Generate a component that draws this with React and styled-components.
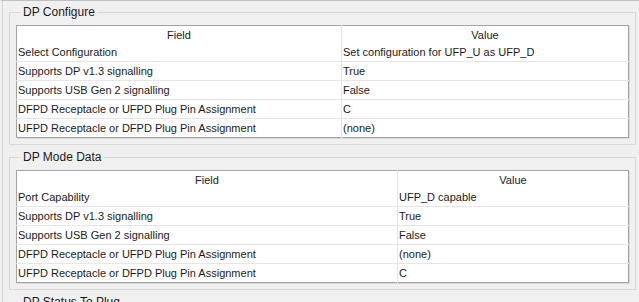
import React from 'react';
import styled, { createGlobalStyle } from 'styled-components';

const configureRows = [
    ['Select Configuration', 'Set configuration for UFP_U as UFP_D'],
    ['Supports DP v1.3 signalling', 'True'],
    ['Supports USB Gen 2 signalling', 'False'],
    ['DFPD Receptacle or UFPD Plug Pin Assignment', 'C'],
    ['UFPD Receptacle or DFPD Plug Pin Assignment', '(none)'],
];

const modeRows = [
    ['Port Capability', 'UFP_D capable'],
    ['Supports DP v1.3 signalling', 'True'],
    ['Supports USB Gen 2 signalling', 'False'],
    ['DFPD Receptacle or UFPD Plug Pin Assignment', '(none)'],
    ['UFPD Receptacle or DFPD Plug Pin Assignment', 'C'],
];

const FieldTable = ({ rows, fieldWidth }) => (
    <Grid>
        <colgroup>
            <col style={{ width: fieldWidth }} />
            <col />
        </colgroup>
        <thead>
            <tr>
                <HeadCell>Field</HeadCell>
                <HeadCell>Value</HeadCell>
            </tr>
        </thead>
        <tbody>
            {rows.map(([field, value], i) => (
                <Row key={field} first={i === 0}>
                    <Cell>{field}</Cell>
                    <Cell>{value}</Cell>
                </Row>
            ))}
        </tbody>
    </Grid>
);

const App = () => (
    <>
        <GlobalStyle />
        <Window>
            <Group>
                <Legend>DP Configure</Legend>
                <FieldTable rows={configureRows} fieldWidth={325} />
            </Group>
            <Group>
                <Legend>DP Mode Data</Legend>
                <FieldTable rows={modeRows} fieldWidth={381} />
            </Group>
            <Group>
                <Legend>DP Status To Plug</Legend>
            </Group>
        </Window>
    </>
);

export default App;

const GlobalStyle = createGlobalStyle`
    html, body {
        margin: 0;
        padding: 0;
        background: #f0f0f0;
        overflow: hidden;
    }
    body {
        font-family: "Liberation Sans", Arial, sans-serif;
        font-size: 11px;
        color: #1a1a1a;
    }
`;

const Window = styled.div`
    height: 302px;
    box-sizing: border-box;
    border-top: 1px solid #bfbfbf;
    border-left: 2px solid #f0f0f0;
    box-shadow: inset 1px 0 0 #d6d6d6;
    padding: 4px 3px 0 7px;
    display: flex;
    flex-direction: column;
    gap: 5px;
    overflow: hidden;
`;

const Group = styled.fieldset`
    flex-shrink: 0;
    margin: 0;
    padding: 6px 5px 6px 6px;
    border: 1px solid #d9d9d9;
    min-width: 0;
    min-height: 40px;
`;

const Legend = styled.legend`
    padding: 0 2px;
    margin-left: 5px;
    line-height: 14px;
    font-size: 12px;
    color: #1a1a1a;
`;

const Grid = styled.table`
    width: 613px;
    border-collapse: collapse;
    table-layout: fixed;
    background: #ffffff;
    border: 1px solid #a3a3a3;
    box-shadow: 1px 1px 0 #dadada;
`;

const HeadCell = styled.th`
    height: 17px;
    padding: 0;
    font-weight: normal;
    text-align: center;
    vertical-align: middle;
    border-left: 1px solid #e3e3e3;

    &:first-child {
        border-left: none;
    }
`;

const Row = styled.tr`
    border-top: ${props => props.first ? 'none' : '1px solid #e6e6e6'};
`;

const Cell = styled.td`
    height: 18px;
    padding: 0 0 0 1px;
    white-space: nowrap;
    overflow: hidden;
    vertical-align: middle;
    border-left: 1px solid #e3e3e3;

    &:first-child {
        border-left: none;
    }
`;
